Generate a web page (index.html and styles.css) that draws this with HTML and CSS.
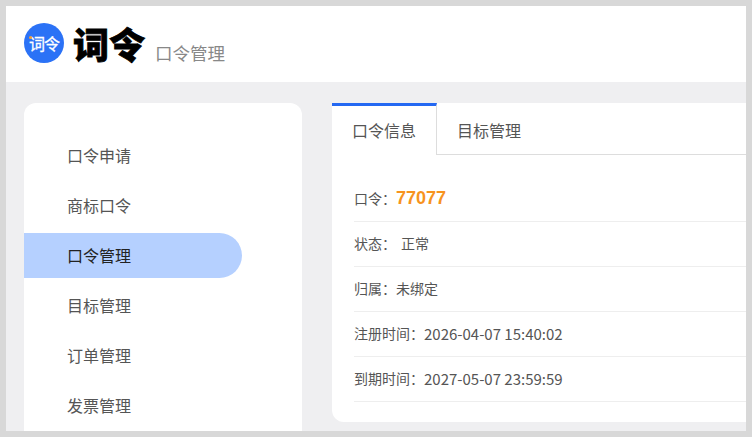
FILE: index.html
```html
<!DOCTYPE html>
<html lang="zh-CN">

<head>
    <meta charset="UTF-8">
    <meta name="viewport" content="width=device-width, initial-scale=1.0">
    <title>口令管理</title>
    <link rel="stylesheet" href="styles.css">
</head>

<body>
    <header class="header">
        <div class="logo"><span class="logo-dot"></span>词令</div>
        <div class="brand">词令</div>
        <div class="subtitle">口令管理</div>
    </header>

    <div class="layout">
        <nav class="sidebar">
            <a class="menu-item">口令申请</a>
            <a class="menu-item">商标口令</a>
            <a class="menu-item active">口令管理</a>
            <a class="menu-item">目标管理</a>
            <a class="menu-item">订单管理</a>
            <a class="menu-item">发票管理</a>
        </nav>

        <main class="panel">
            <div class="tabs">
                <div class="tab active">口令信息</div>
                <div class="tab">目标管理</div>
            </div>
            <div class="info">
                <div class="row"><span class="label">口令：</span><span class="code">77077</span></div>
                <div class="row"><span class="label">状态：</span><span class="label status">正常</span></div>
                <div class="row"><span class="label">归属：</span><span class="label">未绑定</span></div>
                <div class="row"><span class="label">注册时间：</span><span class="value">2026-04-07 15:40:02</span></div>
                <div class="row"><span class="label">到期时间：</span><span class="value">2027-05-07 23:59:59</span></div>
            </div>
        </main>
    </div>
</body>

</html>
```

FILE: styles.css
```css
* {
    margin: 0;
    padding: 0;
    box-sizing: border-box;
}

body {
    height: 437px;
    border: 6px solid #d8d8d8;
    background-color: #efeff1;
    font-family: "Noto Sans CJK SC", "Liberation Sans", sans-serif;
    color: #555;
}

.header {
    display: flex;
    align-items: flex-start;
    height: 76px;
    padding: 17px 0 0 18px;
    background-color: #fff;
}

.logo {
    position: relative;
    width: 40px;
    height: 40px;
    border-radius: 50%;
    background-color: #2b72f6;
    color: #fff;
    font-size: 16px;
    font-weight: 400;
    line-height: 40px;
    text-align: center;
    letter-spacing: -1px;
    -webkit-text-stroke: 0.3px #fff;
}

.logo-dot {
    position: absolute;
    left: 5px;
    top: 13px;
    width: 3px;
    height: 3px;
    border-radius: 50%;
    background-color: #f7a030;
}

.brand {
    margin-left: 9px;
    color: #000;
    font-size: 36px;
    font-weight: 900;
    line-height: 40px;
    -webkit-text-stroke: 0.8px #000;
}

.subtitle {
    margin: 18px 0 0 10px;
    color: #888;
    font-size: 17.5px;
    line-height: 24px;
}

.layout {
    display: flex;
    align-items: flex-start;
    height: 349px;
    padding: 21px 0 0 18px;
    overflow: hidden;
}

.sidebar {
    flex: none;
    width: 278px;
    height: 328px;
    padding-top: 30px;
    border-radius: 12px 12px 0 0;
    background-color: #fff;
    overflow: hidden;
}

.menu-item {
    display: block;
    width: 218px;
    height: 45px;
    margin-bottom: 5px;
    padding-left: 43px;
    border-radius: 0 23px 23px 0;
    font-size: 16px;
    line-height: 45px;
    color: #555;
}

.menu-item.active {
    background-color: #b5d0ff;
    color: #222;
}

.panel {
    flex: none;
    width: 414px;
    height: 319px;
    margin-left: 30px;
    border-radius: 12px 0 0 12px;
    background-color: #fff;
}

.tabs {
    display: flex;
    height: 52px;
    border-bottom: 1px solid #ddd;
}

.tab {
    padding: 3px 20px 0 21px;
    font-size: 16px;
    line-height: 49px;
    color: #555;
    margin-left: -1px;
}

.tab.active {
    width: 105px;
    height: 52px;
    margin-left: 0;
    padding: 0 20px;
    border-top: 3px solid #2468f2;
    border-right: 1px solid #ddd;
    background-color: #fff;
}

.info {
    padding: 22px 0 0 22px;
}

.row {
    display: flex;
    align-items: center;
    height: 45px;
    padding-bottom: 2px;
    border-bottom: 1px solid #eee;
}

.label {
    font-size: 14px;
    color: #555;
}

.value {
    font-size: 15px;
    color: #555;
}

.status {
    margin-left: 5px;
}

.code {
    color: #f7931e;
    font-family: "Liberation Sans", sans-serif;
    font-size: 18px;
    font-weight: 700;
}
```
